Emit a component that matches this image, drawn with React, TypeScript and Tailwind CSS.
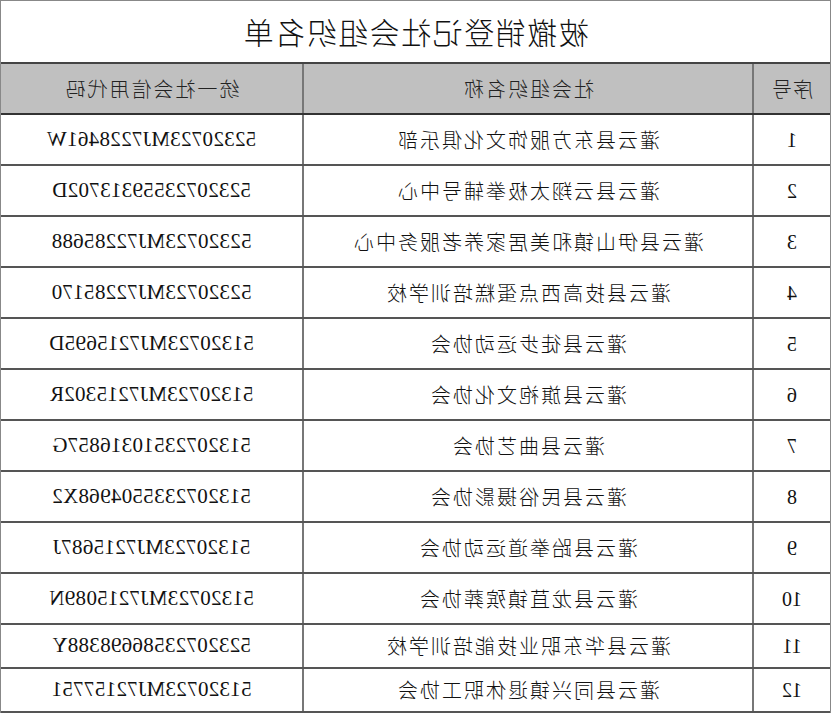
import React from 'react';

type Org = {
  no: number;
  name: string;
  code: string;
};

const orgs: Org[] = [
  { no: 1, name: '灌云县东方服饰文化俱乐部', code: '52320723MJ7228461W' },
  { no: 2, name: '灌云县云翔太极拳辅号中心', code: '52320723559313702D' },
  { no: 3, name: '灌云县伊山镇和美居家养老服务中心', code: '52320723MJ72285688' },
  { no: 4, name: '灌云县技高西点蛋糕培训学校', code: '52320723MJ72285170' },
  { no: 5, name: '灌云县徒步运动协会', code: '51320723MJ7215695D' },
  { no: 6, name: '灌云县旗袍文化协会', code: '51320723MJ7215302R' },
  { no: 7, name: '灌云县曲艺协会', code: '51320723510316857G' },
  { no: 8, name: '灌云县民俗摄影协会', code: '5132072335504968X2' },
  { no: 9, name: '灌云县跆拳道运动协会', code: '51320723MJ7215687J' },
  { no: 10, name: '灌云县龙苴镇殡葬协会', code: '51320723MJ7215089N' },
  { no: 11, name: '灌云县华东职业技能培训学校', code: '52320723586698388Y' },
  { no: 12, name: '灌云县同兴镇退休职工协会', code: '51320723MJ72157751' },
];

const cjk = "font-['Noto_Sans_CJK_SC','Noto_Sans',sans-serif] font-light";
const serif = "font-['Liberation_Serif','Noto_Sans_CJK_SC',serif]";

export default function App() {
  return (
    // the screenshot is a mirror image, so the whole sheet is flipped
    <div className="w-[831px] h-[713px] bg-white text-[#111] -scale-x-100 overflow-hidden">
      <div className="border-l border-r border-t border-[#888] w-[831px]">
        <div
          className={`h-[63px] flex items-center justify-center border-b-2 border-[#444] text-[30px] tracking-[1.5px] ${cjk}`}
        >
          被撤销登记社会组织名单
        </div>

        <div className="grid grid-cols-[78px_450px_1fr] h-[51px] bg-[#c0c0c0] border-b-2 border-[#333] text-[#222]">
          <div className={`flex items-center justify-center border-r-2 border-[#777] text-[20px] tracking-[1px] ${cjk}`}>
            序号
          </div>
          <div className={`flex items-center justify-center border-r-2 border-[#777] text-[20px] tracking-[2px] ${cjk}`}>
            社会组织名称
          </div>
          <div className={`flex items-center justify-center text-[20px] tracking-[2px] ${cjk}`}>
            统一社会信用代码
          </div>
        </div>

        {orgs.map((org) => (
          <div
            key={org.no}
            className={`grid grid-cols-[78px_450px_1fr] border-b-2 border-[#555] ${
              org.no > 10 ? 'h-[44px]' : 'h-[51px]'
            }`}
          >
            <div
              className={`flex items-center justify-center border-r-2 border-[#777] text-[20px] ${serif}`}
            >
              {org.no}
            </div>
            <div
              className={`flex items-center justify-center border-r-2 border-[#777] text-[20px] tracking-[2px] ${cjk}`}
            >
              {org.name}
            </div>
            <div className={`flex items-center justify-center text-[21px] tracking-[0.3px] ${serif}`}>
              {org.code}
            </div>
          </div>
        ))}
      </div>
    </div>
  );
}
